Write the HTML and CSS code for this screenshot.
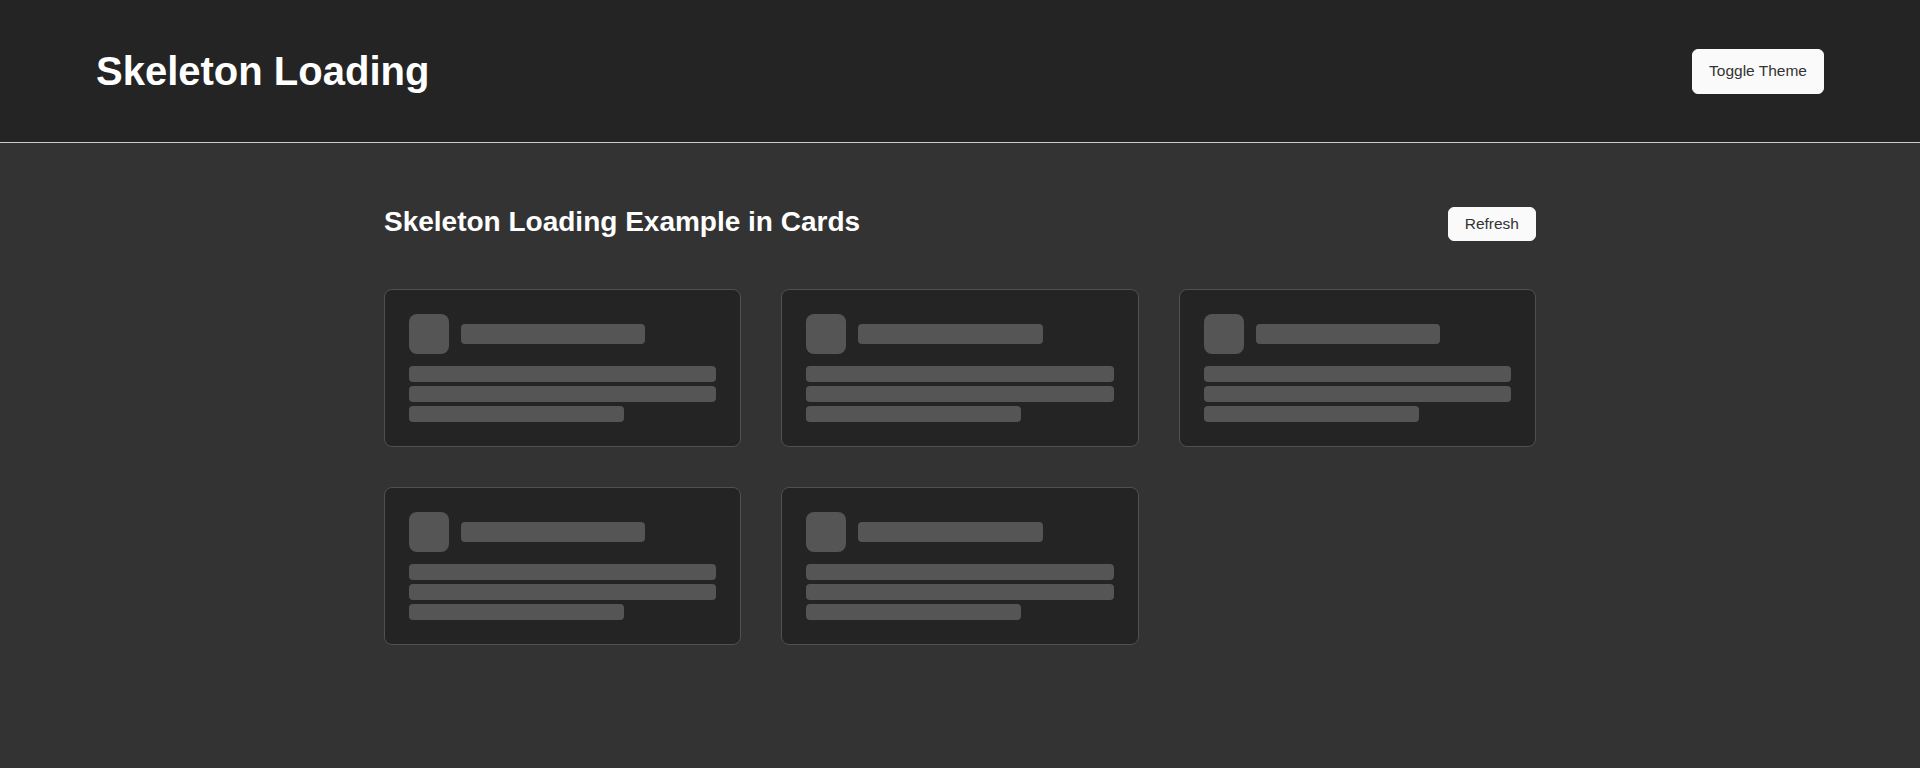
FILE: index.html
```html
<!DOCTYPE html>
<html lang="en">
<head>
<meta charset="utf-8">
<title>Skeleton Loading</title>
<link rel="stylesheet" href="styles.css">
</head>
<body>
<header class="topbar">
  <h1 class="brand">Skeleton Loading</h1>
  <button class="btn btn-lg" type="button">Toggle Theme</button>
</header>
<main class="main">
  <div class="section-head">
    <h2 class="section-title">Skeleton Loading Example in Cards</h2>
    <button class="btn btn-sm" type="button">Refresh</button>
  </div>
  <div class="grid">
    <div class="card">
      <div class="card-top"><div class="sk sk-avatar"></div><div class="sk sk-title"></div></div>
      <div class="sk sk-line"></div><div class="sk sk-line"></div><div class="sk sk-line sk-short"></div>
    </div>
    <div class="card">
      <div class="card-top"><div class="sk sk-avatar"></div><div class="sk sk-title"></div></div>
      <div class="sk sk-line"></div><div class="sk sk-line"></div><div class="sk sk-line sk-short"></div>
    </div>
    <div class="card">
      <div class="card-top"><div class="sk sk-avatar"></div><div class="sk sk-title"></div></div>
      <div class="sk sk-line"></div><div class="sk sk-line"></div><div class="sk sk-line sk-short"></div>
    </div>
    <div class="card">
      <div class="card-top"><div class="sk sk-avatar"></div><div class="sk sk-title"></div></div>
      <div class="sk sk-line"></div><div class="sk sk-line"></div><div class="sk sk-line sk-short"></div>
    </div>
    <div class="card">
      <div class="card-top"><div class="sk sk-avatar"></div><div class="sk sk-title"></div></div>
      <div class="sk sk-line"></div><div class="sk sk-line"></div><div class="sk sk-line sk-short"></div>
    </div>
  </div>
</main>
</body>
</html>
```
FILE: styles.css
```css
* { box-sizing: border-box; }
html, body { margin: 0; padding: 0; }
body {
  background: #333333;
  color: #ffffff;
  font-family: "Liberation Sans", Arial, sans-serif;
  min-height: 100vh;
}
.topbar {
  background: #242424;
  border-bottom: 1px solid #cccccc;
  display: flex;
  align-items: center;
  justify-content: space-between;
  padding: 48px 96px;
  height: 143px;
}
.brand {
  margin: 0;
  font-size: 40px;
  font-weight: 700;
  line-height: 46px;
}
.btn {
  font-family: "Liberation Sans", Arial, sans-serif;
  background: #fafafa;
  color: #333333;
  border: 1px solid #fafafa;
  border-radius: 6px;
  font-size: 15.5px;
  line-height: 18px;
  cursor: pointer;
}
.btn-lg { padding: 12px 16px; height: 45px; }
.btn-sm { padding: 7px 16px; height: 34px; }
.main {
  width: 1152px;
  margin: 0 auto;
  padding-top: 64px;
}
.section-head {
  display: flex;
  align-items: flex-start;
  justify-content: space-between;
  margin-bottom: 48px;
  height: 34px;
}
.section-title {
  margin: 0;
  font-size: 28px;
  font-weight: 700;
  line-height: 30px;
}
.grid {
  display: grid;
  grid-template-columns: repeat(3, 1fr);
  gap: 40px;
}
.card {
  background: #242424;
  border: 1px solid #505050;
  border-radius: 8px;
  padding: 24px;
}
.card-top {
  display: flex;
  align-items: center;
  gap: 12px;
  margin-bottom: 12px;
}
.sk { background: #555555; border-radius: 4px; }
.sk-avatar { width: 40px; height: 40px; border-radius: 8px; flex: none; }
.sk-title { width: 60%; height: 20px; }
.sk-line { height: 16px; margin-bottom: 4px; }
.sk-line:last-child { margin-bottom: 0; }
.sk-short { width: 70%; }
```
